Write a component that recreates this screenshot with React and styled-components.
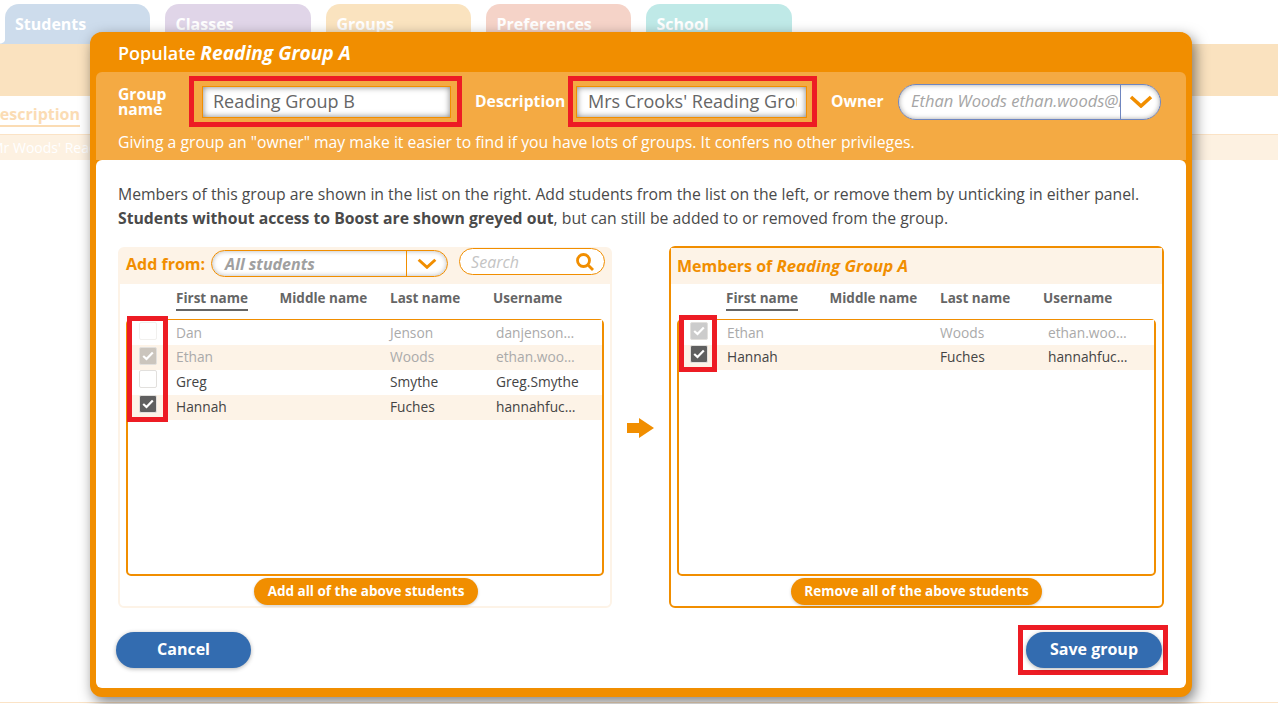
import React from "react";
import styled, { createGlobalStyle } from "styled-components";

const ORANGE = "#f18e00";
const BLUE = "#336cb0";

const Global = createGlobalStyle`
  html, body { margin: 0; padding: 0; background: #fff; overflow: hidden; }
  body { font-family: "Open Sans", "Noto Sans", sans-serif; color: #444; }
  * { box-sizing: border-box; }
`;

const Page = styled.div`
  position: relative;
  width: 1278px;
  height: 704px;
  overflow: hidden;
  padding-top: 4px;
`;
const Tabs = styled.nav`
  display: flex;
  gap: 15px;
  padding-left: 5px;
  height: 40px;
`;
const Tab = styled.div`
  position: relative;
  width: ${p => p.$w}px;
  border-radius: 14px 14px 0 0;
  background: ${p => p.$bg};
  color: #fff;
  font-size: 16px;
  font-weight: 700;
  padding: 8px 0 0 ${p => (p.$first ? 10 : 10.5)}px;
  line-height: 24px;
  ${p => p.$first && `
    &::before {
      content: "";
      position: absolute;
      left: -5px;
      bottom: 0;
      width: 5px;
      height: 6px;
      background: radial-gradient(circle at 0 0, transparent 5px, ${p.$bg} 6px);
    }
  `}
`;
const Band = styled.div`
  height: 52px;
  background: #fae2bf;
`;
const BgHeading = styled.div`
  height: 39px;
  padding: 7px 0 0;
  margin-left: -12px;
  border-bottom: 1px solid #fbe3c6;
`;
const BgLink = styled.span`
  display: inline-block;
  color: #fbdcb4;
  font-size: 16px;
  font-weight: 700;
  line-height: 22px;
  border-bottom: 2px solid #fbdcb4;
`;
const BgRow = styled.div`
  height: 25px;
  background: #fdf1e1;
  color: #fff;
  font-size: 14px;
  line-height: 25px;
  text-indent: -9px;
`;
const BgFoot = styled.div`
  position: absolute;
  left: 0; right: 0; top: 702px;
  height: 1px;
  background: #fbe3c6;
`;

const Modal = styled.section`
  position: absolute;
  left: 90px;
  top: 32px;
  width: 1102px;
  height: 665px;
  border: 6px solid ${ORANGE};
  border-top-width: 0;
  border-bottom-width: 9px;
  border-radius: 12px;
  background: ${ORANGE};
  box-shadow: 3px 5px 14px rgba(0,0,0,.5);
  display: flex;
  flex-direction: column;
`;
const Title = styled.h2`
  margin: 0;
  height: 40px;
  padding-left: 22px;
  color: #fff;
  font-size: 18px;
  font-weight: 600;
  line-height: 42px;
  white-space: nowrap;
  em { font-size: 19.2px; font-weight: 700; font-style: italic; }
`;
const Settings = styled.div`
  height: 88px;
  background: #f4aa43;
  border-radius: 6px 6px 0 0;
  padding: 4px 0 0 22px;
`;
const FieldRow = styled.div`
  display: flex;
  align-items: center;
  height: 51px;
`;
const FieldLabel = styled.label`
  color: #fff;
  font-size: 15.7px;
  font-weight: 700;
  line-height: 15px;
  width: ${p => p.$w}px;
  padding-left: ${p => p.$pl || 0}px;
  flex: none;
`;
const Flagged = styled.div`
  border: 5px solid #ed1c24;
  flex: none;
  height: 51px;
  width: ${p => p.$w}px;
  padding: ${p => p.$pad};
`;
const TextInput = styled.div`
  height: 32px;
  border: 1px solid ${ORANGE};
  background: #fff;
  box-shadow: inset 0 0 6px rgba(0,0,0,.5);
  color: #666;
  font-size: 18px;
  line-height: 28px;
  padding: 0 ${p => p.$pr}px 0 ${p => p.$pl}px;
`;
const InputText = styled.span`
  display: block;
  overflow: hidden;
  white-space: nowrap;
`;
const OwnerSelect = styled.div`
  width: 263px;
  height: 36px;
  border: 1px solid #6f86c0;
  border-radius: 18px;
  background: #fff;
  box-shadow: inset 0 0 5px rgba(0,0,0,.35);
  display: flex;
  overflow: hidden;
`;
const OwnerValue = styled.div`
  width: 222px;
  flex: none;
  padding-left: 12px;
  font-size: 16.5px;
  font-style: italic;
  color: #a5a5a5;
  line-height: 31px;
  white-space: nowrap;
  overflow: hidden;
  border-right: 1px solid #6f86c0;
`;
const Caret = styled.div`
  flex: 1;
  display: flex;
  align-items: center;
  justify-content: center;
`;
const Note = styled.p`
  margin: 0;
  padding-top: 3px;
  color: #fff;
  font-size: 15.75px;
  line-height: 24px;
  white-space: nowrap;
`;
const Body = styled.div`
  flex: 1;
  background: #fff;
  border-radius: 6px;
  padding: 22px 22px 0 20px;
  display: flex;
  flex-direction: column;
`;
const Intro = styled.p`
  margin: 0 0 0 2px;
  font-size: 15.75px;
  line-height: 24px;
  color: #4a4a4a;
  white-space: nowrap;
  b { font-weight: 700; }
`;
const Columns = styled.div`
  margin: 16px 0 0 2px;
  display: grid;
  grid-template-columns: 494px 57px 495px;
  height: 362px;
`;
const ArrowCell = styled.div`
  display: flex;
  align-items: center;
  justify-content: center;
  padding-top: 1px;
`;
const Panel = styled.div`
  position: relative;
  border: 2px solid ${p => (p.$accent ? ORANGE : "#fdf3e7")};
  border-radius: 6px;
  margin-top: ${p => (p.$accent ? 0 : 1)}px;
  display: flex;
  flex-direction: column;
  align-items: center;
`;
const PanelHead = styled.div`
  align-self: stretch;
  height: ${p => p.$h}px;
  background: #fdf3e7;
  display: flex;
  align-items: flex-start;
  padding: 1px 6px 0;
  flex: none;
`;
const HeadLabel = styled.div`
  color: ${ORANGE};
  font-size: 16px;
  font-weight: 700;
  line-height: 24px;
  padding-top: ${p => p.$pt}px;
  white-space: nowrap;
  em { font-size: 16.8px; font-style: italic; }
`;
const FromSelect = styled.div`
  margin-left: 6px;
  width: 237px;
  height: 27px;
  border: 1px solid ${ORANGE};
  border-radius: 14px;
  box-shadow: inset 0 0 5px rgba(0,0,0,.3);
  background: #fff;
  display: flex;
  overflow: hidden;
  flex: none;
`;
const FromValue = styled.div`
  width: 195px;
  flex: none;
  padding-left: 13px;
  font-size: 16px;
  font-weight: 700;
  font-style: italic;
  color: #a0a0a0;
  line-height: 27px;
  border-right: 1px solid ${ORANGE};
`;
const SearchBox = styled.div`
  margin: -2px 0 0 11px;
  width: 146px;
  height: 27px;
  border: 1px solid ${ORANGE};
  border-radius: 14px;
  background: #fff;
  display: flex;
  align-items: center;
  justify-content: space-between;
  padding: 0 9px 0 11px;
  flex: none;
  color: #c4c4c4;
  font-size: 16px;
  font-style: italic;
`;
const ColumnHead = styled.div`
  align-self: stretch;
  height: 35px;
  flex: none;
  display: grid;
  grid-template-columns: 103.5px 110.5px 103px 1fr;
  padding-left: ${p => p.$lead}px;
  font-size: 13.5px;
  font-weight: 700;
  color: #666;
  line-height: 28px;
`;
const ColTitle = styled.div`
  height: 27px;
  justify-self: start;
  ${p => p.$active && `border-bottom: 2px solid #666;`}
`;
const List = styled.div`
  position: relative;
  align-self: stretch;
  margin: 0 6px;
  height: 257px;
  flex: none;
  border: 2px solid ${ORANGE};
  border-radius: 5px;
`;
const Row = styled.div`
  height: 25px;
  padding-bottom: 2px;
  display: grid;
  grid-template-columns: 48px ${p => p.$c1}px ${p => p.$c2}px 1fr;
  align-items: center;
  background: ${p => (p.$shade ? "#fdf3e7" : "#fff")};
  color: ${p => (p.$muted ? "#aaa" : "#444")};
  font-size: 13.75px;
  &:first-child { margin-top: -1px; padding-bottom: 0; }
`;
const Box = styled.span`
  display: flex;
  align-items: center;
  justify-content: center;
  align-self: start;
  width: 18px;
  height: 18px;
  margin: ${p => p.$top}px 0 0 11px;
  border: 1px solid ${p => (p.$faint ? "#f1f0ee" : "#e2e0dd")};
  border-radius: 2px;
  background: ${p => p.$bg || "#fff"};
`;
const Cell = styled.span`
  display: block;
  white-space: nowrap;
  overflow: hidden;
  text-overflow: ellipsis;
  max-width: 84px;
`;
const NameCell = styled.span`
  display: block;
  white-space: nowrap;
`;
const Highlight = styled.div`
  position: absolute;
  left: ${p => p.$l}px;
  top: ${p => p.$t}px;
  width: ${p => p.$w}px;
  height: ${p => p.$h}px;
  border: 5px solid #ed1c24;
  pointer-events: none;
`;
const SmallButton = styled.button`
  margin: 2px 0 0 ${p => p.$shift || 0}px;
  height: 27px;
  width: ${p => p.$w}px;
  border: 0;
  border-radius: 14px;
  background: ${ORANGE};
  color: #fff;
  font-family: inherit;
  font-size: 13.5px;
  font-weight: 700;
  padding: 0 0 2px;
  box-shadow: 0 1px 3px rgba(0,0,0,.2);
`;
const Footer = styled.div`
  display: flex;
  justify-content: space-between;
  align-items: center;
  margin: 17px -4px 0 0;
  height: 50px;
`;
const BigButton = styled.button`
  height: 36px;
  width: ${p => p.$w}px;
  border: 0;
  border-radius: 18px;
  background: ${BLUE};
  color: #fff;
  font-family: inherit;
  font-size: 16px;
  font-weight: 700;
  padding: 0 0 2px;
  box-shadow: 0 1px 4px rgba(0,0,0,.3);
`;
const SaveFlag = styled.div`
  width: 150px;
  height: 50px;
  border: 5px solid #ed1c24;
  padding: 2px 1px 0 3px;
  display: flex;
  justify-content: center;
`;

const Check = () => (
  <svg width="12" height="10" viewBox="0 0 12 10" fill="none" stroke="#fff" strokeWidth="2.2">
    <path d="M1.2 5 L4.5 8 L10.8 1.5" />
  </svg>
);
const Chevron = ({ w = 24, h = 13, sw = 3.6 }) => (
  <svg width={w} height={h} viewBox="0 0 24 13" fill="none" stroke={ORANGE} strokeWidth={sw}>
    <path d="M2 2 L12 11 L22 2" />
  </svg>
);
const Magnifier = () => (
  <svg width="20" height="20" viewBox="0 0 20 20" fill="none" stroke={ORANGE} strokeWidth="2.8">
    <circle cx="8.5" cy="8.5" r="6" />
    <path d="M13 13 L18 18" />
  </svg>
);
const BlockArrow = () => (
  <svg width="27" height="20" viewBox="0 0 27 20" fill={ORANGE}>
    <path d="M0 5 H12 V0 L27 10 L12 20 V15 H0 Z" />
  </svg>
);

const tabs = [
  ["Students", "#cddcec", 145],
  ["Classes", "#e0d5e8", 146],
  ["Groups", "#fae3bf", 145],
  ["Preferences", "#f5d3c8", 145],
  ["School", "#bfe9e7", 146],
];

const available = [
  { first: "Dan", last: "Jenson", user: "danjenson@boost.org", muted: true, top: 2 },
  { first: "Ethan", last: "Woods", user: "ethan.woods@boost.org", muted: true, shade: true, tick: "#cbc5bd", top: 2 },
  { first: "Greg", last: "Smythe", user: "Greg.Smythe", top: 0 },
  { first: "Hannah", last: "Fuches", user: "hannahfuches@boost.org", shade: true, tick: "#5f5f5f", top: 0 },
];
const members = [
  { first: "Ethan", last: "Woods", user: "ethan.woods@boost.org", muted: true, tick: "#cccccc", top: 2 },
  { first: "Hannah", last: "Fuches", user: "hannahfuches@boost.org", shade: true, tick: "#5f5f5f", top: 0 },
];

const Titles = ({ lead }) => (
  <ColumnHead $lead={lead}>
    <ColTitle $active>First name</ColTitle>
    <ColTitle>Middle name</ColTitle>
    <ColTitle>Last name</ColTitle>
    <ColTitle>Username</ColTitle>
  </ColumnHead>
);

const Rows = ({ items, c1, c2 }) =>
  items.map(s => (
    <Row key={s.first} $c1={c1} $c2={c2} $shade={s.shade} $muted={s.muted}>
      <Box $bg={s.tick} $top={s.top} $faint={s.muted && !s.tick}>{s.tick && <Check />}</Box>
      <NameCell>{s.first}</NameCell>
      <NameCell>{s.last}</NameCell>
      <Cell>{s.user}</Cell>
    </Row>
  ));

export default function App() {
  return (
    <Page>
      <Global />
      <Tabs>
        {tabs.map(([t, bg, w], i) => (
          <Tab key={t} $bg={bg} $w={w} $first={i === 0}>{t}</Tab>
        ))}
      </Tabs>
      <Band />
      <BgHeading><BgLink>Description</BgLink></BgHeading>
      <BgRow>Mr Woods' Reading Group</BgRow>
      <BgFoot />

      <Modal>
        <Title>Populate <em>Reading Group A</em></Title>
        <Settings>
          <FieldRow>
            <FieldLabel $w={71}>Group name</FieldLabel>
            <Flagged $w={273} $pad="5px 6px 0 8px">
              <TextInput $pl={10} $pr={5}><InputText>Reading Group B</InputText></TextInput>
            </Flagged>
            <FieldLabel $w={106} $pl={13}>Description</FieldLabel>
            <Flagged $w={249} $pad="5px 5px 0 3px">
              <TextInput $pl={11} $pr={9}><InputText>Mrs Crooks' Reading Group</InputText></TextInput>
            </Flagged>
            <FieldLabel $w={81} $pl={14}>Owner</FieldLabel>
            <OwnerSelect>
              <OwnerValue>Ethan Woods ethan.woods@boost.org</OwnerValue>
              <Caret><Chevron /></Caret>
            </OwnerSelect>
          </FieldRow>
          <Note>Giving a group an "owner" may make it easier to find if you have lots of groups. It confers no other privileges.</Note>
        </Settings>
        <Body>
          <Intro>
            Members of this group are shown in the list on the right. Add students from the list on the left, or remove them by unticking in either panel.<br />
            <b>Students without access to Boost are shown greyed out</b>, but can still be added to or removed from the group.
          </Intro>
          <Columns>
            <Panel>
              <PanelHead $h={35}>
                <HeadLabel $pt={2}>Add from:</HeadLabel>
                <FromSelect>
                  <FromValue>All students</FromValue>
                  <Caret><Chevron w={20} h={11} /></Caret>
                </FromSelect>
                <SearchBox>Search<Magnifier /></SearchBox>
              </PanelHead>
              <Titles lead={56} />
              <List>
                <Rows items={available} c1={214} c2={106} />
                <Highlight $l={-1} $t={-5} $w={41} $h={106} />
              </List>
              <SmallButton $w={224} $shift={2}>Add all of the above students</SmallButton>
            </Panel>
            <ArrowCell><BlockArrow /></ArrowCell>
            <Panel $accent>
              <PanelHead $h={36}>
                <HeadLabel $pt={5}>Members of <em>Reading Group A</em></HeadLabel>
              </PanelHead>
              <Titles lead={55} />
              <List>
                <Rows items={members} c1={213} c2={108} />
                <Highlight $l={0} $t={-6} $w={38} $h={57} />
              </List>
              <SmallButton $w={251}>Remove all of the above students</SmallButton>
            </Panel>
          </Columns>
          <Footer>
            <BigButton $w={135}>Cancel</BigButton>
            <SaveFlag><BigButton $w={136}>Save group</BigButton></SaveFlag>
          </Footer>
        </Body>
      </Modal>
    </Page>
  );
}
